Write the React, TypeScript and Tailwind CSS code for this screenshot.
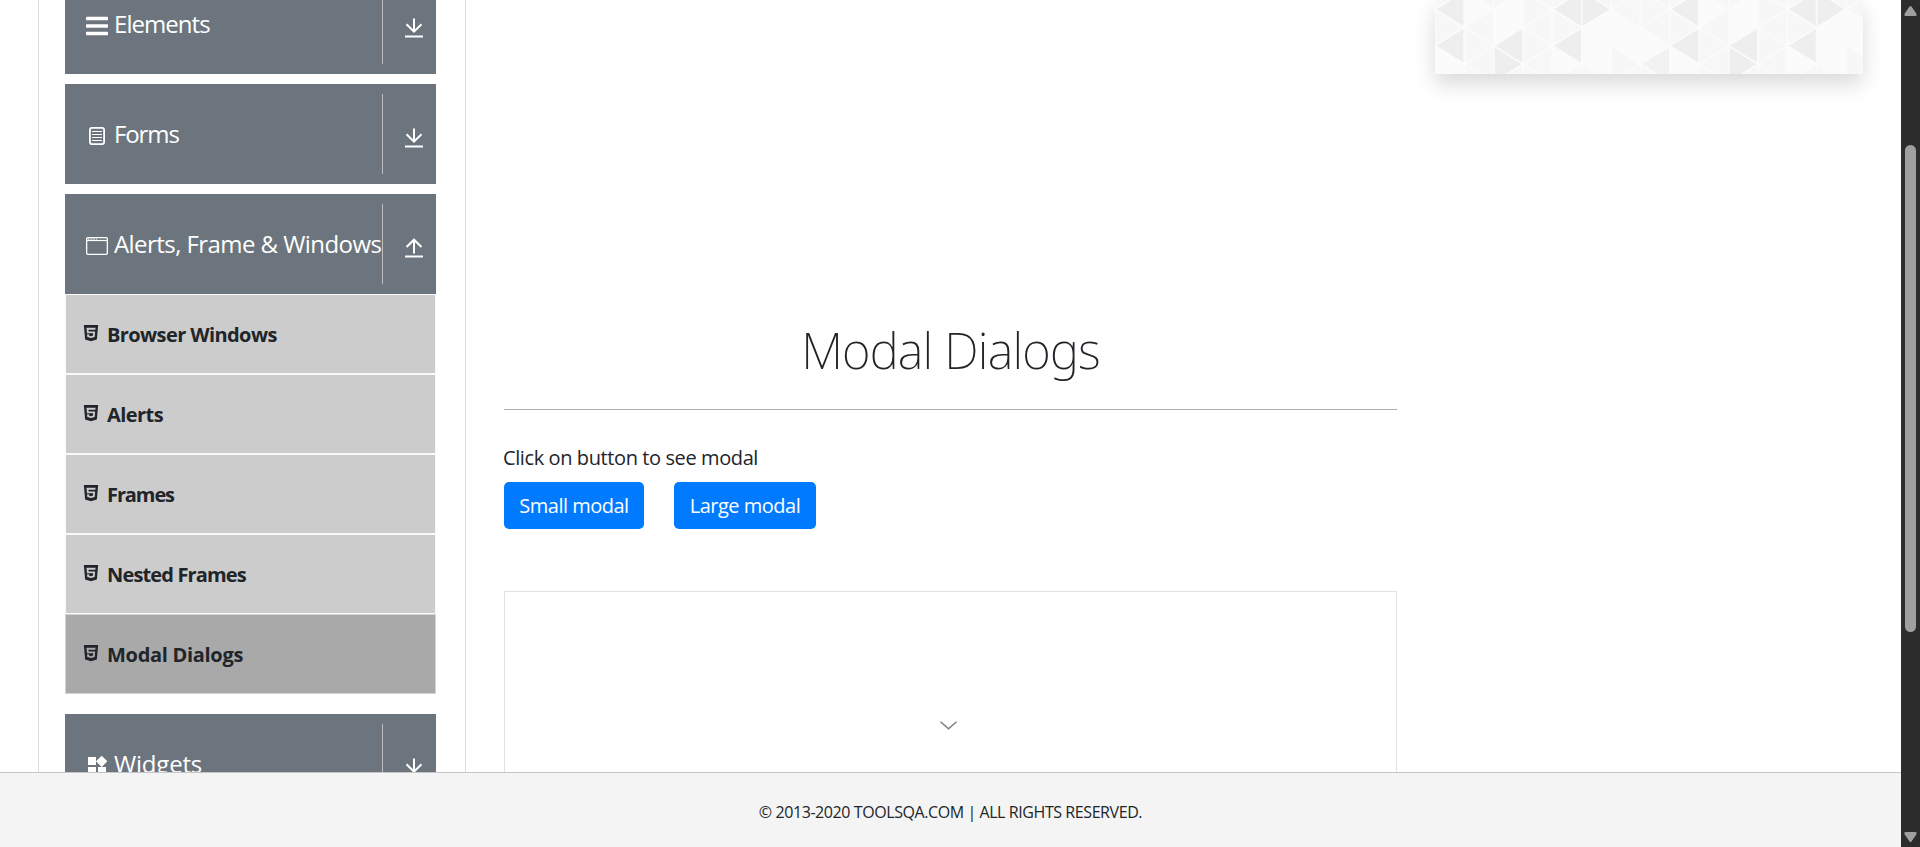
import React from "react";
import { AiFillHtml5 } from "react-icons/ai";
import { MdWidgets } from "react-icons/md";

const COL = 29.36;
const HALF = 18.3;

// Shade keys are "column:direction:vertexRow"; rows count half-steps from y = 9.3.
const DARK = new Set(["0:l:0", "0:l:2", "2:l:2", "2:r:3", "4:l:0", "4:l:2", "5:r:0"]);
const MEDIUM = new Set(["7:l:3"]);
const LIGHT = new Set(["1:r:0", "2:r:1", "2:l:0", "5:l:1", "5:r:2", "5:l:3", "0:r:3", "0:l:4", "4:r:3", "6:r:1", "6:l:2", "7:r:2"]);

function shade(key: string) {
  if (DARK.has(key)) return "#eeeeee";
  if (MEDIUM.has(key)) return "#f2f2f2";
  if (LIGHT.has(key)) return "#fbfbfb";
  return "#f7f7f7";
}

function TrianglePattern() {
  const shapes: React.ReactElement[] = [];
  for (let c = 0; c < 15; c++) {
    const x0 = c * COL;
    const x1 = x0 + COL;
    for (let r = -2; r < 6; r++) {
      const y = 9.3 + r * HALF;
      const left = (c + r) % 2 === 0;
      const key = `${c % 8}:${left ? "l" : "r"}:${r}`;
      const points = left
        ? `${x0},${y} ${x1},${y - HALF} ${x1},${y + HALF}`
        : `${x1},${y} ${x0},${y - HALF} ${x0},${y + HALF}`;
      shapes.push(<polygon key={`${c}-${r}`} points={points} fill={shade(key)} stroke="#fbfbfb" strokeWidth="1.6" />);
    }
  }
  return (
    <svg width="428" height="74" viewBox="0 0 428 74" className="block bg-[#fafafa]">
      {shapes}
    </svg>
  );
}

function BarsIcon() {
  return (
    <svg width="22" height="20" viewBox="0 0 22 20" fill="#fff">
      <rect x="0" y="0.8" width="22" height="3.5" rx="0.8" />
      <rect x="0" y="8.2" width="22" height="3.5" rx="0.8" />
      <rect x="0" y="15.7" width="22" height="3.5" rx="0.8" />
    </svg>
  );
}

function FormIcon() {
  return (
    <svg width="22" height="18" viewBox="0 0 22 18" fill="none" stroke="#fff">
      <rect x="3.9" y="0.9" width="14.2" height="16.2" rx="2" strokeWidth="1.8" />
      <path d="M6 4.5h10M6 7.5h10M6 10.5h10M6 13.5h10" strokeWidth="1" />
    </svg>
  );
}

function WindowIcon() {
  return (
    <svg width="22" height="18" viewBox="0 0 22 18" fill="none" stroke="#fff">
      <rect x="0.65" y="0.65" width="20.7" height="16.7" rx="1" strokeWidth="1.3" />
      <path d="M1 3.5h20" strokeWidth="1.2" />
      <path d="M2 2h1.6M4.7 2h1.6M7.4 2h1.6M10 2h1" strokeWidth="1.2" />
    </svg>
  );
}

function ArrowIcon({ up }: { up?: boolean }) {
  return (
    <svg width="18" height="20" viewBox="0 0 18 20" fill="none" stroke="#fff" strokeWidth="2">
      {up ? <path d="M9 15.5V2M1.5 9 9 1.7 16.5 9" /> : <path d="M9 0.5V14M1.5 6.2 9 13.7 16.5 6.2" />}
      <path d="M0 18.5h18" />
    </svg>
  );
}

function Header({ icon, label, up, track }: { icon: React.ReactNode; label: string; up?: boolean; track: string }) {
  return (
    <div className="flex h-[100px] w-[371px] shrink-0 items-center bg-[#6c757d] text-white">
      <div className="flex h-20 w-[318px] shrink-0 items-center border-r border-[#bfbfbf] pl-[21px]">
        <span className="flex w-[22px] shrink-0 justify-center pt-[4px]">{icon}</span>
        <span className={`-mt-px ml-[6px] whitespace-nowrap text-[24px] leading-[30px] ${track}`}>{label}</span>
      </div>
      <span className="ml-[22px] pt-[7px]">
        <ArrowIcon up={up} />
      </span>
    </div>
  );
}

const ITEMS = [
  { label: "Browser Windows", track: "tracking-[-0.6px]" },
  { label: "Alerts", track: "tracking-[-0.55px]" },
  { label: "Frames", track: "tracking-[-1.1px]" },
  { label: "Nested Frames", track: "tracking-[-0.85px]" },
  { label: "Modal Dialogs", track: "tracking-[-0.3px]", active: true },
];

export default function App() {
  return (
    <div className="flex h-[847px] w-[1920px] overflow-hidden bg-white font-['Open_Sans',sans-serif] text-[#212529]">
      <div className="flex w-[1901px] shrink-0 flex-col">
        <div className="flex h-[772px] overflow-hidden">
          <aside className="ml-[38px] flex h-[772px] w-[428px] shrink-0 flex-col justify-start overflow-hidden border-x border-[#dcdcdc] pl-[26px]">
            <div className="-mt-[26px] flex flex-col gap-[10px]">
              <Header icon={<BarsIcon />} label="Elements" track="tracking-[-0.95px]" />
              <Header icon={<FormIcon />} label="Forms" track="tracking-[-1.1px]" />
              <Header icon={<WindowIcon />} label="Alerts, Frame & Windows" up track="tracking-[-0.56px]" />
            </div>
            <ul className="mb-5 flex w-[371px] flex-col">
              {ITEMS.map((item) => (
                <li
                  key={item.label}
                  className={
                    item.active
                      ? "flex h-20 items-center border border-[#d3d3d8] bg-[#a9a9a9] pl-[15px]"
                      : "flex h-20 items-center border border-[#f8f9fa] bg-[#cccccc] pl-[15px]"
                  }
                >
                  <AiFillHtml5 size={20} className="-mt-[2px]" />
                  <span className={`mt-[2px] ml-[6px] text-[20px] leading-[30px] font-bold ${item.track}`}>{item.label}</span>
                </li>
              ))}
            </ul>
            <Header icon={<MdWidgets size={24} className="shrink-0" />} label="Widgets" track="tracking-[-0.2px]" />
          </aside>

          <main className="ml-[38px] flex w-[893px] shrink-0 flex-col pt-[320px]">
            <h1 className="text-center font-['Noto_Sans',sans-serif] text-[49px] leading-[60px] font-[250] tracking-[-0.8px]">
              Modal Dialogs
            </h1>
            <hr className="mt-[29px] border-t border-[#acacac]" />
            <p className="mt-[33px] -ml-px text-[20px] leading-[30px] tracking-[-0.4px]">Click on button to see modal</p>
            <div className="mt-[9px] flex gap-[30px]">
              <button className="h-[47px] w-[140px] rounded-[5px] bg-[#007bff] text-[20px] tracking-[-0.5px] whitespace-nowrap text-white">
                Small modal
              </button>
              <button className="h-[47px] w-[142px] rounded-[5px] bg-[#007bff] text-[20px] tracking-[-0.5px] whitespace-nowrap text-white">
                Large modal
              </button>
            </div>
            <div className="mt-[62px] flex-1 border border-b-0 border-[#dee2e6] pt-[129px] pl-[435px]">
              <svg width="17" height="9" viewBox="0 0 17 9" fill="none" stroke="#7d7d7d" strokeWidth="1.5">
                <path d="M0.5 0.7 8.5 7.8 16.5 0.7" />
              </svg>
            </div>
          </main>

          <div className="ml-[38px] h-[74px] w-[428px] shrink-0 shadow-[0_10px_20px_rgba(0,0,0,0.15)]">
            <TrianglePattern />
          </div>
        </div>

        <footer className="flex h-[75px] items-center justify-center border-t border-[#c6c6c6] bg-[#f4f4f4] pt-[3px]">
          <span className="text-[16px] leading-6 tracking-[-0.42px]">© 2013-2020 TOOLSQA.COM | ALL RIGHTS RESERVED.</span>
        </footer>
      </div>

      <div className="flex w-[19px] shrink-0 flex-col items-center bg-[#2c2c2c] pt-[6px] pb-[5px]">
        <svg width="13" height="10" viewBox="0 0 13 10" fill="#9f9f9f">
          <path d="M5.5 0.6Q6.5 -0.4 7.5 0.6L12.4 7.8Q13 10 11.5 10H1.5Q0 10 0.6 7.8Z" />
        </svg>
        <div className="mt-[129px] h-[487px] w-[11px] rounded-full bg-[#9f9f9f]" />
        <svg width="13" height="10" viewBox="0 0 13 10" fill="#9f9f9f" className="mt-auto">
          <path d="M5.5 9.4Q6.5 10.4 7.5 9.4L12.4 2.2Q13 0 11.5 0H1.5Q0 0 0.6 2.2Z" />
        </svg>
      </div>
    </div>
  );
}
